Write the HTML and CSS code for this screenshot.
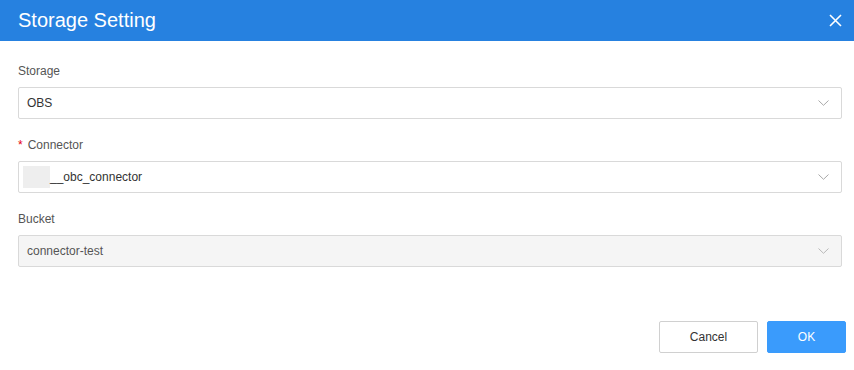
FILE: index.html
```html
<!DOCTYPE html>
<html lang="en">
<head>
  <meta charset="UTF-8" />
  <title>Storage Setting</title>
  <link rel="stylesheet" href="styles.css">
</head>
<body>
  <div class="dialog">
    <div class="dialog-header">
      <span class="dialog-title">Storage Setting</span>
      <svg class="close" width="13" height="13" viewBox="0 0 13 13">
        <path d="M1 1 L12 12 M12 1 L1 12" stroke="#fff" stroke-width="1.6" fill="none" />
      </svg>
    </div>

    <div class="dialog-body">
      <div class="field">
        <label>Storage</label>
        <div class="select">
          <span>OBS</span>
          <svg class="chevron" width="11" height="6" viewBox="0 0 11 6"><path d="M0.5 0.5 L5.5 5.3 L10.5 0.5" stroke="#a8a8a8" fill="none" /></svg>
        </div>
      </div>

      <div class="field">
        <label><span class="req">*</span>Connector</label>
        <div class="select">
          <span><i class="masked"></i>__obc_connector</span>
          <svg class="chevron" width="11" height="6" viewBox="0 0 11 6"><path d="M0.5 0.5 L5.5 5.3 L10.5 0.5" stroke="#a8a8a8" fill="none" /></svg>
        </div>
      </div>

      <div class="field">
        <label>Bucket</label>
        <div class="select disabled">
          <span>connector-test</span>
          <svg class="chevron" width="11" height="6" viewBox="0 0 11 6"><path d="M0.5 0.5 L5.5 5.3 L10.5 0.5" stroke="#b8b8b8" fill="none" /></svg>
        </div>
      </div>
    </div>

    <div class="dialog-footer">
      <button class="btn">Cancel</button>
      <button class="btn primary">OK</button>
    </div>
  </div>
</body>
</html>
```

FILE: styles.css
```css
* {
  margin: 0;
  padding: 0;
  box-sizing: border-box;
}
body {
  font-family: 'Liberation Sans', Arial, sans-serif;
  background: #ffffff;
  color: #333;
  width: 854px;
  height: 370px;
  overflow: hidden;
}
.dialog {
  width: 854px;
}
.dialog-header {
  height: 41px;
  background: #2681e0;
  display: flex;
  align-items: center;
  justify-content: space-between;
  padding: 0 12px 1px 18px;
}
.dialog-title {
  color: #fff;
  font-size: 20px;
}
.close {
  display: block;
}
.dialog-body {
  padding: 22px 12px 0 18px;
}
.field {
  margin-bottom: 18px;
}
.field label {
  display: block;
  font-size: 12px;
  line-height: 16px;
  color: #555;
  margin-bottom: 8px;
}
.req {
  color: #e6000f;
  margin-right: 5px;
}
.select {
  height: 32px;
  border: 1px solid #d9d9d9;
  border-radius: 2px;
  display: flex;
  align-items: center;
  justify-content: space-between;
  padding: 0 12px 0 8px;
  font-size: 12px;
  color: #333;
}
.select span {
  display: flex;
  align-items: center;
}
.select.disabled {
  background: #f5f5f5;
  color: #555;
}
.masked {
  display: inline-block;
  width: 27px;
  height: 22px;
  background: #eeeeee;
  margin-left: -4px;
}
.dialog-footer {
  display: flex;
  justify-content: flex-end;
  gap: 9px;
  padding: 36px 8px 0 0;
}
.btn {
  height: 32px;
  width: 99px;
  font-family: inherit;
  font-size: 12px;
  color: #333;
  background: #fff;
  border: 1px solid #d0d0d0;
  border-radius: 2px;
}
.btn.primary {
  width: 79px;
  background: #3a9bfc;
  border-color: #3a9bfc;
  color: #fff;
}
```
